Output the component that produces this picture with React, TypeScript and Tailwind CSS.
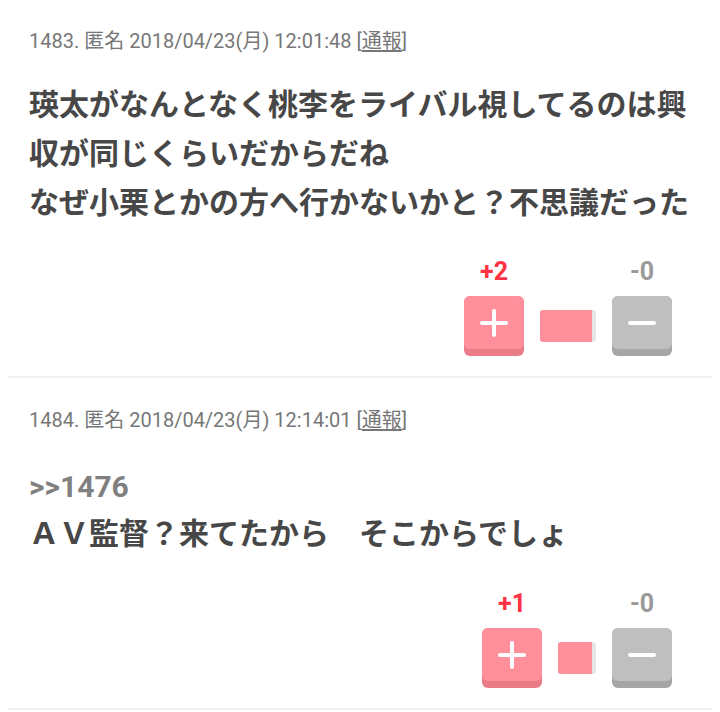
import React from "react";

type Post = {
  no: number;
  date: string;
  lines: string[];
  anchor?: string;
  plus: number;
  minus: number;
  barWidth: string;
  fillWidth: string;
};

const POSTS: Post[] = [
  {
    no: 1483,
    date: "2018/04/23(月) 12:01:48",
    lines: [
      "瑛太がなんとなく桃李をライバル視してるのは興",
      "収が同じくらいだからだね",
      "なぜ小栗とかの方へ行かないかと？不思議だった",
    ],
    plus: 2,
    minus: 0,
    barWidth: "w-[56px]",
    fillWidth: "w-[52px]",
  },
  {
    no: 1484,
    date: "2018/04/23(月) 12:14:01",
    anchor: ">>1476",
    lines: ["ＡＶ監督？来てたから　そこからでしょ"],
    plus: 1,
    minus: 0,
    barWidth: "w-[38px]",
    fillWidth: "w-[34px]",
  },
];

function PlusIcon() {
  return (
    <svg width="28" height="28" viewBox="0 0 28 28" fill="none">
      <path d="M14 2v24M2 14h24" stroke="white" strokeWidth="4" strokeLinecap="round" />
    </svg>
  );
}

function MinusIcon() {
  return (
    <svg width="30" height="28" viewBox="0 0 30 28" fill="none">
      <path d="M3 14h24" stroke="white" strokeWidth="4" strokeLinecap="round" />
    </svg>
  );
}

function VoteButton({ kind }: { kind: "plus" | "minus" }) {
  const plus = kind === "plus";
  return (
    <div
      role="button"
      className={`mt-[10px] h-[60px] w-[60px] rounded-[6px] ${plus ? "bg-[#ea7c87]" : "bg-[#a6a6a6]"}`}
    >
      <div
        className={`flex h-[53px] w-[60px] items-center justify-center rounded-[6px] ${
          plus ? "bg-[#ff8f9a]" : "bg-[#bfbfbf]"
        }`}
      >
        {plus ? <PlusIcon /> : <MinusIcon />}
      </div>
    </div>
  );
}

function PostItem({ post, first }: { post: Post; first: boolean }) {
  return (
    <article
      className={`border-b-2 border-[#f0f0f0] px-[21px] pb-[20px] ${first ? "pt-[29px]" : "pt-[30px]"}`}
    >
      <div className="text-[20px] leading-6 text-[#777]">
        {post.no}. 匿名 {post.date} [<span className="underline underline-offset-2">通報</span>]
      </div>
      <div
        className={`font-bold text-[30px] text-[#474747] ${
          first ? "mt-[27px] leading-[49px]" : "mt-[31px] leading-[47px]"
        }`}
      >
        {post.anchor && <div className="text-[#808080]">{post.anchor}</div>}
        {post.lines.map((l) => (
          <div key={l} className="whitespace-nowrap">
            {l}
          </div>
        ))}
      </div>
      <div className={`flex items-end justify-end gap-4 pr-[19px] ${first ? "mt-[31px]" : "mt-[33px]"}`}>
        <div className="flex w-[60px] flex-col items-center">
          <span className="text-[25px] font-bold leading-[28px] text-[#ff3344]">+{post.plus}</span>
          <VoteButton kind="plus" />
        </div>
        <div className={`mb-[14px] h-[32px] overflow-hidden rounded-[3px] bg-[#e6e6e6] ${post.barWidth}`}>
          <div className={`h-full bg-[#ff8f9a] ${post.fillWidth}`} />
        </div>
        <div className="flex w-[60px] flex-col items-center">
          <span className="text-[25px] font-bold leading-[28px] text-[#999]">-{post.minus}</span>
          <VoteButton kind="minus" />
        </div>
      </div>
    </article>
  );
}

export default function App() {
  return (
    <div
      className="min-h-screen bg-white px-2"
      style={{ fontFamily: 'Roboto, "Noto Sans CJK JP", sans-serif' }}
    >
      {POSTS.map((p, i) => (
        <PostItem key={p.no} post={p} first={i === 0} />
      ))}
    </div>
  );
}
